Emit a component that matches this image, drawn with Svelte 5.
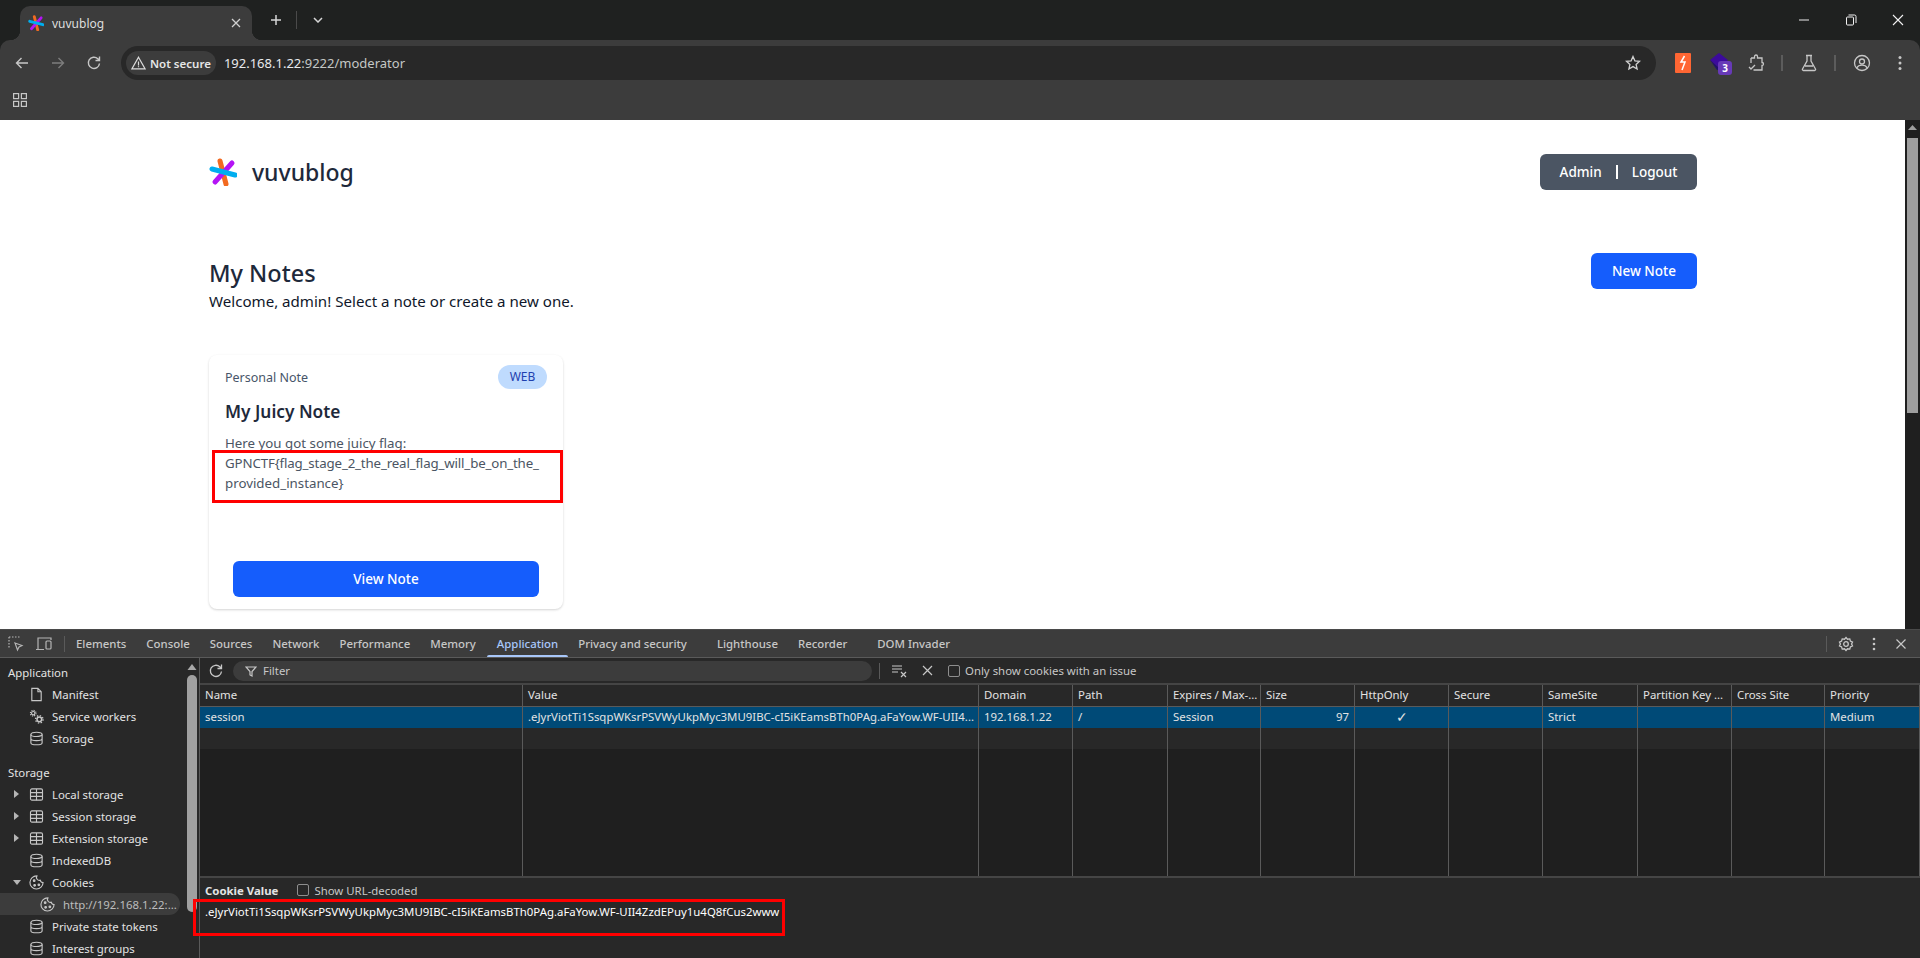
<script>
	const columns = ['Name', 'Value', 'Domain', 'Path', 'Expires / Max-...', 'Size', 'HttpOnly', 'Secure', 'SameSite', 'Partition Key ...', 'Cross Site', 'Priority'];
	const row = ['session', '.eJyrViotTi1SsqpWKsrPSVWyUkpMyc3MU9IBC-cI5iKEamsBTh0PAg.aFaYow.WF-UII4...', '192.168.1.22', '/', 'Session', '97', '✓', '', 'Strict', '', '', 'Medium'];
	const tabs = ['Elements', 'Console', 'Sources', 'Network', 'Performance', 'Memory', 'Application', 'Privacy and security', 'Lighthouse', 'Recorder', 'DOM Invader'];
	const fullValue = '.eJyrViotTi1SsqpWKsrPSVWyUkpMyc3MU9IBC-cI5iKEamsBTh0PAg.aFaYow.WF-UII4ZzdEPuy1u4Q8fCus2www';
	const blank = Array.from({ length: 5 }, (_, i) => i);
</script>

{#snippet logo(size)}
	<svg width={size} height={size} viewBox="0 0 28 28" fill="none" stroke-width="5" stroke-linecap="round">
		<path d="M11 3 L17 26" stroke="#f26a21" />
		<path d="M23 5 L6 24" stroke="#b414f5" />
		<path d="M3 11 L26 17" stroke="#00aeef" />
	</svg>
{/snippet}

{#snippet db()}
	<svg class="ico" viewBox="0 0 16 16" fill="none" stroke="#c7c7c7" stroke-width="1.2">
		<ellipse cx="8" cy="3.6" rx="6" ry="2.3" />
		<path d="M2 3.6v8.8c0 1.3 2.7 2.3 6 2.3s6-1 6-2.3V3.6M2 8c0 1.3 2.7 2.3 6 2.3s6-1 6-2.3" />
	</svg>
{/snippet}

{#snippet grid()}
	<svg class="ico" viewBox="0 0 16 16" fill="none" stroke="#c7c7c7" stroke-width="1.2">
		<rect x="1.6" y="2" width="12.8" height="12" rx="1.5" />
		<path d="M1.6 6h12.8M1.6 10h12.8M8 2v12" />
	</svg>
{/snippet}

{#snippet cookie(cls)}
	<svg class="ico {cls}" viewBox="0 0 16 16" fill="none" stroke="#c7c7c7" stroke-width="1.2">
		<path d="M8.5 1a7 7 0 1 0 6.5 7 3 3 0 0 1-3-2.500 3 3 0 0 1-3.500-4.500z" />
		<circle cx="5.500" cy="6" r=".9" fill="#c7c7c7" />
		<circle cx="10.500" cy="10.500" r=".9" fill="#c7c7c7" />
		<circle cx="6" cy="11" r=".9" fill="#c7c7c7" />
	</svg>
{/snippet}

<div class="window">
	<div class="tabstrip">
		<div class="tab">
			{@render logo(16)}
			<span class="tab-title">vuvublog</span>
			<svg class="tab-x" width="10" height="10" viewBox="0 0 10 10" stroke="#d0d0d0" stroke-width="1.300"><path d="M1 1l8 8M9 1l-8 8" /></svg>
		</div>
		<svg class="plus" width="12" height="12" viewBox="0 0 12 12" stroke="#d6d6d6" stroke-width="1.500"><path d="M6 1v10M1 6h10" /></svg>
		<span class="strip-sep"></span>
		<svg class="chev" width="10" height="6" viewBox="0 0 10 6" fill="none" stroke="#d6d6d6" stroke-width="1.500"><path d="M1 1l4 4 4-4" /></svg>
		<div class="winctl">
			<svg width="12" height="12" viewBox="0 0 12 12" stroke="#a8a8a8" stroke-width="1.500"><path d="M1 6h10" /></svg>
			<svg width="12" height="12" viewBox="0 0 12 12" fill="none" stroke="#f2f2f2" stroke-width="1"><rect x="1.500" y="3" width="7" height="8" rx="1" /><path d="M3.500 1h6a1.500 1.500 0 0 1 1.500 1.500V9" /></svg>
			<svg width="12" height="12" viewBox="0 0 12 12" stroke="#f2f2f2" stroke-width="1.100"><path d="M1 1l10 10M11 1L1 11" /></svg>
		</div>
	</div>

	<div class="chrome">
		<div class="toolbar">
			<svg class="nav" viewBox="0 0 16 16" fill="none" stroke="#c7c7c7" stroke-width="1.400"><path d="M14 8H2.500M7.500 3l-5 5 5 5" /></svg>
			<svg class="nav" viewBox="0 0 16 16" fill="none" stroke="#7d7d7d" stroke-width="1.400"><path d="M2 8h11.500M8.500 3l5 5-5 5" /></svg>
			<svg class="nav" viewBox="0 0 16 16" fill="none" stroke="#c7c7c7" stroke-width="1.400"><path d="M13.500 8.500A5.600 5.600 0 1 1 11.800 3.800L13.500 5.500M13.500 1.500v4h-4" /></svg>
			<div class="omnibox">
				<div class="chip">
					<svg width="15" height="14" viewBox="0 0 15 14" fill="none" stroke="#dcdcdc" stroke-width="1.200"><path d="M7.500 1.200 14 12.800H1zM7.500 5.500v4M7.500 10.300v1" /></svg>
					<span>Not secure</span>
				</div>
				<span class="url"><b>192.168.1.22</b>:9222/moderator</span>
				<svg class="star" width="16" height="16" viewBox="0 0 16 16" fill="none" stroke="#d0d0d0" stroke-width="1.300"><path d="M8 1.500l1.900 4.300 4.600.5-3.400 3.100 1 4.600L8 11.600l-4.100 2.400 1-4.600L1.500 6.300l4.600-.5z" /></svg>
			</div>
			<div class="exts">
				<div class="ext-bolt">
					<svg width="10" height="16" viewBox="0 0 10 16" fill="none" stroke="#fff" stroke-width="1.500"><path d="M6.500 1 3 7h4L4 15" /></svg>
				</div>
				<div class="ext-gem">
					<svg width="20" height="18" viewBox="0 0 20 18"><path d="M9 0l9 7-9 8-9-8z" fill="#3c0a9c" /><path d="M0 7l9 8 3 2-5 0z" fill="#21106b" /></svg>
					<span class="badge3">3</span>
				</div>
				<svg class="tool-ico" viewBox="0 0 18 18" fill="none" stroke="#c7c7c7" stroke-width="1.300"><path d="M4 4h3.500V2.500a1.500 1.500 0 0 1 3 0V4H15v4.500a1.500 1.500 0 0 1 0 3V16H6.500M4 4v5M2 13l2 2 4-4" /></svg>
				<span class="tool-sep"></span>
				<svg class="tool-ico" viewBox="0 0 18 18" fill="none" stroke="#c7c7c7" stroke-width="1.300"><path d="M6 1.500h6M7 1.500v5.500L2.500 15a1 1 0 0 0 .9 1.500h11.200a1 1 0 0 0 .9-1.500L11 7V1.500M5 12h8" /></svg>
				<span class="tool-sep"></span>
				<svg class="tool-ico" viewBox="0 0 18 18" fill="none" stroke="#c7c7c7" stroke-width="1.300"><circle cx="9" cy="9" r="7.500" /><circle cx="9" cy="7.500" r="2.500" /><path d="M3.800 14c1-2 3-2.800 5.200-2.800s4.200.8 5.200 2.800" /></svg>
				<svg class="dots" width="4" height="16" viewBox="0 0 4 16" fill="#c7c7c7"><circle cx="2" cy="2.500" r="1.500" /><circle cx="2" cy="8" r="1.500" /><circle cx="2" cy="13.500" r="1.500" /></svg>
			</div>
		</div>
		<div class="bookmarks">
			<svg width="14" height="14" viewBox="0 0 14 14" fill="none" stroke="#c7c7c7" stroke-width="1.200"><rect x=".6" y=".6" width="5" height="5" /><rect x="8.400" y=".6" width="5" height="5" /><rect x=".6" y="8.400" width="5" height="5" /><rect x="8.400" y="8.400" width="5" height="5" /></svg>
		</div>
	</div>

	<div class="viewport">
		<main class="page">
			<header class="site-head">
				<div class="brand">
					{@render logo(28)}
					<span>vuvublog</span>
				</div>
				<div class="account">
					<span>Admin</span><i></i><span>Logout</span>
				</div>
			</header>
			<section class="title-row">
				<div class="title-text">
					<h1>My Notes</h1>
					<p>Welcome, admin! Select a note or create a new one.</p>
				</div>
				<button class="new-note">New Note</button>
			</section>
			<article class="card">
				<div class="card-top">
					<span>Personal Note</span>
					<span class="tag">WEB</span>
				</div>
				<h2>My Juicy Note</h2>
				<p class="note-body">Here you got some juicy flag:<br /><span class="flag">GPNCTF&#123;flag_stage_2_the_real_flag_will_be_on_the_</span><br />provided_instance&#125;</p>
				<button class="view-note">View Note</button>
				<div class="red-box"></div>
			</article>
		</main>
		<div class="page-scroll">
			<svg width="15" height="15" viewBox="0 0 15 15" fill="#9e9e9e"><path d="M3 10l4.500-5 4.500 5z" /></svg>
			<div class="page-thumb"></div>
		</div>
	</div>

	<div class="devtools">
		<div class="dt-tabs">
			<svg class="dt-i" viewBox="0 0 16 16" fill="none" stroke="#b5b5b5" stroke-width="1.200"><path d="M1 1h11M1 1v11" stroke-dasharray="1.500 1.500" /><path d="M7 7l7 2.500-3 1.500-1.500 3z" /></svg>
			<svg class="dt-i dev" viewBox="0 0 18 16" fill="none" stroke="#b5b5b5" stroke-width="1.200"><path d="M4 2h-1v11M1 13.500h8" /><rect x="11" y="5" width="5" height="8" rx="1" /><path d="M4 2h12v2" /></svg>
			<span class="dt-sep"></span>
			<div class="dt-tablist">
				{#each tabs as tab}
					<span class:active={tab === 'Application'}>{tab}</span>
				{/each}
			</div>
			<div class="dt-right">
				<span class="dt-sep"></span>
				<svg class="dt-gear" width="16" height="16" viewBox="0 0 16 16" fill="none" stroke="#c7c7c7" stroke-width="1.300"><path d="M8 1.500l1.500 1.700 2.300-.3.600 2.200 2.100 1L13.600 8l.9 1.900-2.100 1-.6 2.200-2.300-.3L8 14.500l-1.500-1.700-2.300.3-.6-2.200-2.100-1L2.400 8l-.9-1.900 2.100-1 .6-2.200 2.300.3z" /><circle cx="8" cy="8" r="2.300" /></svg>
				<svg class="dt-more" width="4" height="14" viewBox="0 0 4 14" fill="#c7c7c7"><circle cx="2" cy="2" r="1.300" /><circle cx="2" cy="7" r="1.300" /><circle cx="2" cy="12" r="1.300" /></svg>
				<svg class="dt-close" width="10" height="10" viewBox="0 0 10 10" stroke="#c7c7c7" stroke-width="1.200"><path d="M.5.500l9 9M9.500.500l-9 9" /></svg>
			</div>
		</div>

		<div class="dt-body">
			<aside class="sidebar">
				<div class="side-list">
					<div class="side-head">Application</div>
					<div class="side-item">
						<svg class="ico" viewBox="0 0 16 16" fill="none" stroke="#c7c7c7" stroke-width="1.200"><path d="M3 1.500h6.500l3.500 3.500v9.500H3zM9.500 1.500V5H13" /></svg>
						Manifest
					</div>
					<div class="side-item">
						<svg class="ico" viewBox="0 0 16 16">
							<circle cx="4.500" cy="4.500" r="1.800" fill="none" stroke="#c7c7c7" stroke-width="1.200" />
							<circle cx="4.500" cy="4.500" r="3" fill="none" stroke="#c7c7c7" stroke-width="1.200" stroke-dasharray="1.200 1.160" />
							<circle cx="11" cy="11" r="2.500" fill="none" stroke="#c7c7c7" stroke-width="1.600" />
							<circle cx="11" cy="11" r="4" fill="none" stroke="#c7c7c7" stroke-width="1.400" stroke-dasharray="1.500 1.640" />
						</svg>
						Service workers
					</div>
					<div class="side-item">{@render db()} Storage</div>
					<div class="side-head storage">Storage</div>
					<div class="side-item"><span class="arrow right"></span>{@render grid()} Local storage</div>
					<div class="side-item"><span class="arrow right"></span>{@render grid()} Session storage</div>
					<div class="side-item"><span class="arrow right"></span>{@render grid()} Extension storage</div>
					<div class="side-item">{@render db()} IndexedDB</div>
					<div class="side-item"><span class="arrow down"></span>{@render cookie('')} Cookies</div>
					<div class="side-item sub">{@render cookie('')} <span class="host">http://192.168.1.22:...</span></div>
					<div class="side-item">{@render db()} Private state tokens</div>
					<div class="side-item">{@render db()} Interest groups</div>
				</div>
				<div class="side-scroll">
					<svg width="12" height="10" viewBox="0 0 12 10" fill="#a8a8a8"><path d="M1.500 8l4.500-6 4.500 6z" /></svg>
					<div class="side-thumb"></div>
				</div>
			</aside>

			<div class="cookies">
				<div class="filter-bar">
					<svg class="refresh" width="16" height="16" viewBox="0 0 16 16" fill="none" stroke="#c7c7c7" stroke-width="1.300"><path d="M13.500 8.500A5.600 5.600 0 1 1 11.800 3.800L13.500 5.500M13.500 1.500v4h-4" /></svg>
					<div class="filter">
						<svg width="12" height="12" viewBox="0 0 12 12" fill="none" stroke="#c7c7c7" stroke-width="1.200"><path d="M1 2h10L7 6.500V11L5 10V6.500z" /></svg>
						<span>Filter</span>
					</div>
					<span class="fb-sep"></span>
					<svg class="fb-clear" width="16" height="14" viewBox="0 0 16 14" fill="none" stroke="#c7c7c7" stroke-width="1.200"><path d="M1 2h10M1 5h10M1 8h6M10 8l5 5M15 8l-5 5" /></svg>
					<svg class="fb-x" width="11" height="11" viewBox="0 0 11 11" stroke="#c7c7c7" stroke-width="1.200"><path d="M1 1l9 9M10 1l-9 9" /></svg>
					<label class="check"><i></i>Only show cookies with an issue</label>
				</div>

				<div class="table">
					<div class="tr th">
						{#each columns as c}<div class="cell">{c}</div>{/each}
					</div>
					<div class="tr selected">
						{#each row as c, i}<div class="cell" class:num={i === 5} class:mid={i === 6}>{c}</div>{/each}
					</div>
					{#each blank as n}
						<div class="tr" class:alt={n === 0} class:grow={n === 4}>
							{#each columns as c}<div class="cell"></div>{/each}
						</div>
					{/each}
				</div>

				<div class="cookie-value">
					<div class="cv-head">
						<strong>Cookie Value</strong>
						<label class="check"><i></i>Show URL-decoded</label>
					</div>
					<div class="cv-text">{fullValue}</div>
					<div class="red-box2"></div>
				</div>
			</div>
		</div>
	</div>
</div>

<style>
	:global(body) {
		margin: 0;
		background: #fff;
	}

	.window {
		display: flex;
		flex-direction: column;
		width: 1920px;
		height: 958px;
		overflow: hidden;
		background: #1f2120;
		font-family: "Noto Sans", sans-serif;
	}

	/* browser frame */
	.tabstrip {
		display: flex;
		align-items: center;
		height: 40px;
		flex: none;
		padding-left: 20px;
	}

	.tab {
		position: relative;
		display: flex;
		align-items: center;
		align-self: flex-end;
		box-sizing: border-box;
		width: 232px;
		height: 34px;
		padding: 0 10px 0 8px;
		gap: 8px;
		border-radius: 10px 10px 0 0;
		background: #3c3c3c;
		color: #dedede;
		font-size: 12px;
	}

	.tab::before,
	.tab::after {
		content: "";
		position: absolute;
		bottom: 0;
		width: 10px;
		height: 10px;
	}

	.tab::before {
		left: -10px;
		background: radial-gradient(circle at 0 0, transparent 10px, #3c3c3c 10.5px);
	}

	.tab::after {
		right: -10px;
		background: radial-gradient(circle at 100% 0, transparent 10px, #3c3c3c 10.5px);
	}

	.tab-title {
		flex: 1;
	}

	.tab-x {
		margin-right: 1px;
	}

	.plus {
		margin-left: 18px;
	}

	.strip-sep {
		width: 1px;
		height: 18px;
		margin-left: 14px;
		background: #4a4a4a;
	}

	.chev {
		margin-left: 16px;
	}

	.winctl {
		display: flex;
		gap: 35px;
		margin-left: auto;
		padding-right: 16px;
	}

	.chrome {
		flex: none;
		height: 80px;
		border-radius: 10px 10px 0 0;
		background: #3c3c3c;
	}

	.toolbar {
		display: flex;
		align-items: center;
		height: 46px;
		padding-left: 14px;
	}

	.nav {
		width: 16px;
		height: 16px;
		margin-right: 20px;
	}

	.omnibox {
		display: flex;
		align-items: center;
		box-sizing: border-box;
		width: 1535px;
		height: 34px;
		margin-left: -1px;
		padding: 0 15px 0 5px;
		border-radius: 17px;
		background: #282828;
		font-size: 13px;
		color: #c4c7c5;
	}

	.chip {
		display: flex;
		align-items: center;
		gap: 4px;
		box-sizing: border-box;
		height: 24px;
		padding: 0 5px;
		border-radius: 12px;
		background: #3c3c3c;
		color: #e6e6e6;
		font-size: 11.500px;
		font-weight: 600;
		white-space: nowrap;
	}

	.url {
		margin-left: 8px;
	}

	.url b {
		color: #e8eaed;
		font-weight: 400;
	}

	.star {
		margin-left: auto;
	}

	.exts {
		display: flex;
		align-items: center;
		margin-left: 19px;
	}

	.ext-bolt {
		display: flex;
		align-items: center;
		justify-content: center;
		width: 16px;
		height: 20px;
		border-radius: 1px;
		background: #ff6633;
	}

	.ext-gem {
		position: relative;
		width: 20px;
		height: 20px;
		margin-left: 19px;
		margin-right: 17px;
	}

	.badge3 {
		position: absolute;
		left: 8px;
		top: 8px;
		width: 14px;
		height: 14px;
		border-radius: 3px;
		background: #673ab7;
		color: #fff;
		font-size: 10px;
		font-weight: 700;
		line-height: 14px;
		text-align: center;
	}

	.tool-ico {
		width: 18px;
		height: 18px;
	}

	.tool-sep {
		width: 2px;
		height: 16px;
		margin: 0 17px 0 16px;
		background: #5c5c5c;
	}

	.dots {
		margin-left: 27px;
	}

	.bookmarks {
		display: flex;
		align-items: center;
		box-sizing: border-box;
		height: 34px;
		padding: 0 0 6px 13px;
	}

	/* page */
	.viewport {
		display: flex;
		flex: none;
		height: 509px;
		background: #fff;
	}

	.page {
		flex: 1;
		box-sizing: border-box;
		padding: 33px 208px 0 209px;
		color: #1e293b;
	}

	.site-head {
		display: flex;
		align-items: center;
		justify-content: space-between;
		height: 38px;
	}

	.brand {
		display: flex;
		align-items: center;
		gap: 15px;
		font-size: 23px;
		font-weight: 500;
	}

	.account {
		display: flex;
		align-items: center;
		justify-content: center;
		box-sizing: border-box;
		width: 157px;
		height: 36px;
		gap: 14px;
		border-radius: 6px;
		background: #4b5563;
		color: #fff;
		font-size: 13.500px;
		font-weight: 500;
	}

	.account i {
		width: 2px;
		height: 14px;
		background: #fff;
	}

	.title-row {
		display: flex;
		align-items: flex-start;
		justify-content: space-between;
		margin-top: 62px;
	}

	.title-text {
		padding-top: 4px;
	}

	h1 {
		margin: 0;
		font-size: 23.500px;
		font-weight: 500;
		line-height: 32px;
	}

	.title-text p {
		margin: 0;
		color: #0f172a;
		font-size: 15.100px;
		line-height: 24px;
	}

	.new-note,
	.view-note {
		border: 0;
		border-radius: 6px;
		background: #155dfc;
		color: #fff;
		font-family: inherit;
		font-size: 13.500px;
		font-weight: 500;
	}

	.new-note {
		width: 106px;
		height: 36px;
	}

	.card {
		position: relative;
		display: flex;
		flex-direction: column;
		box-sizing: border-box;
		width: 354px;
		height: 254px;
		margin-top: 42px;
		padding: 10px 16px 12px;
		border-radius: 8px;
		box-shadow: 0 1px 3px rgba(0, 0, 0, 0.1), 0 1px 2px rgba(0, 0, 0, 0.08);
	}

	.card-top {
		display: flex;
		align-items: center;
		justify-content: space-between;
		color: #475569;
		font-size: 12.500px;
	}

	.tag {
		box-sizing: border-box;
		width: 49px;
		height: 24px;
		border-radius: 12px;
		background: #bfdbfe;
		color: #1e40af;
		font-size: 12px;
		line-height: 24px;
		text-align: center;
	}

	h2 {
		margin: 9px 0 0;
		font-size: 17.300px;
		font-weight: 600;
		line-height: 28px;
	}

	.note-body {
		margin: 7px 0 0;
		color: #4b5563;
		font-size: 13.300px;
		line-height: 20px;
	}

	.flag {
		letter-spacing: -0.15px;
	}

	.view-note {
		width: 306px;
		height: 36px;
		margin: auto 0 0 8px;
	}

	.red-box {
		position: absolute;
		left: 3px;
		top: 95px;
		width: 351px;
		height: 53px;
		box-sizing: border-box;
		border: 3px solid #f00;
	}

	.page-scroll {
		display: flex;
		flex-direction: column;
		flex: none;
		width: 15px;
		background: #1f1f1f;
	}

	.page-thumb {
		height: 275px;
		margin: 3px 2px 0;
		background: #9e9e9e;
	}

	/* devtools */
	.devtools {
		display: flex;
		flex-direction: column;
		flex: 1;
		min-height: 0;
		border-top: 1px solid #4a4a4a;
		background: #282828;
		color: #e3e3e3;
		font-size: 11.400px;
	}

	.dt-tabs {
		display: flex;
		align-items: center;
		flex: none;
		box-sizing: border-box;
		height: 28px;
		padding-left: 8px;
		border-bottom: 1px solid #5a5a5a;
		background: #3c3c3c;
	}

	.dt-i {
		width: 16px;
		height: 16px;
	}

	.dt-i.dev {
		width: 18px;
		margin-left: 11px;
	}

	.dt-sep {
		width: 1px;
		height: 16px;
		margin: 0 11px;
		background: #5a5a5a;
	}

	.dt-tablist {
		display: flex;
		align-self: stretch;
		gap: 20px;
		color: #c7c7c7;
		font-weight: 500;
	}

	.dt-tablist span {
		display: flex;
		align-items: center;
		position: relative;
		white-space: nowrap;
	}

	.dt-tablist span:last-child,
	.dt-tablist span:nth-last-child(3) {
		margin-left: 10px;
	}

	.dt-tablist .active {
		margin-left: 1px;
		color: #a8c7fa;
	}

	.dt-tablist .active::after {
		content: "";
		position: absolute;
		left: -10px;
		right: -10px;
		bottom: 0;
		height: 2px;
		border-radius: 2px 2px 0 0;
		background: #a8c7fa;
	}

	.dt-right {
		display: flex;
		align-items: center;
		margin-left: auto;
		padding-right: 14px;
	}

	.dt-right .dt-sep {
		margin: 0;
	}

	.dt-gear {
		margin-left: 11px;
	}

	.dt-more {
		margin-left: 18px;
	}

	.dt-close {
		margin-left: 20px;
	}

	.dt-body {
		display: flex;
		flex: 1;
		min-height: 0;
	}

	.sidebar {
		display: flex;
		flex: none;
		width: 199px;
		border-right: 1px solid #5a5a5a;
	}

	.side-list {
		flex: 1;
		min-width: 0;
		padding-top: 3px;
	}

	.side-head {
		display: flex;
		align-items: center;
		height: 22px;
		padding-left: 8px;
	}

	.side-head.storage {
		margin-top: 12px;
	}

	.side-item {
		position: relative;
		display: flex;
		align-items: center;
		gap: 8px;
		height: 22px;
		padding-left: 29px;
		white-space: nowrap;
	}

	.side-item.sub {
		margin-right: 4px;
		padding-left: 40px;
		border-radius: 0 11px 11px 0;
		background: #3c3c3c;
		color: #bdbdbd;
	}

	.ico {
		flex: none;
		width: 15px;
		height: 15px;
	}

	.arrow {
		position: absolute;
		width: 0;
		height: 0;
	}

	.arrow.right {
		left: 14px;
		top: 7px;
		border-left: 5px solid #b5b5b5;
		border-top: 4px solid transparent;
		border-bottom: 4px solid transparent;
	}

	.arrow.down {
		left: 13px;
		top: 9px;
		border-top: 5px solid #b5b5b5;
		border-left: 4px solid transparent;
		border-right: 4px solid transparent;
	}

	.side-scroll {
		display: flex;
		flex-direction: column;
		align-items: center;
		flex: none;
		width: 15px;
		padding-top: 4px;
	}

	.side-thumb {
		width: 10px;
		height: 237px;
		margin-top: 3px;
		border-radius: 5px;
		background: #a0a0a0;
	}

	.cookies {
		display: flex;
		flex-direction: column;
		flex: 1;
		min-width: 0;
	}

	.filter-bar {
		display: flex;
		align-items: center;
		flex: none;
		box-sizing: border-box;
		height: 27px;
		padding-left: 8px;
		border-bottom: 2px solid #454545;
	}

	.refresh {
		margin-right: 9px;
	}

	.filter {
		display: flex;
		align-items: center;
		gap: 6px;
		box-sizing: border-box;
		width: 639px;
		height: 20px;
		padding-left: 12px;
		border-radius: 10px;
		background: #3c3c3c;
		color: #c7c7c7;
	}

	.fb-sep {
		width: 1px;
		height: 16px;
		margin: 0 11px 0 7px;
		background: #5a5a5a;
	}

	.fb-x {
		margin-left: 15px;
	}

	.check {
		display: flex;
		align-items: center;
		gap: 5px;
		color: #c7c7c7;
	}

	.check i {
		box-sizing: border-box;
		width: 12px;
		height: 12px;
		border: 1px solid #8e8e8e;
		border-radius: 2px;
	}

	.filter-bar .check {
		margin-left: 15px;
	}

	.table {
		display: flex;
		flex-direction: column;
		flex: 1;
		min-height: 0;
	}

	.tr {
		display: grid;
		grid-template-columns: 323px 456px 94px 95px 93px 94px 94px 94px 95px 94px 93px 95px;
		flex: none;
		height: 21px;
		background: #1f1f1f;
	}

	.tr.th {
		border-bottom: 1px solid #5a5a5a;
		background: #282828;
	}

	.tr.selected {
		background: #004a77;
	}

	.tr.alt {
		background: #282828;
	}

	.tr.grow {
		flex: 1;
	}

	.cell {
		overflow: hidden;
		padding: 0 5px;
		border-right: 1px solid #5a5a5a;
		line-height: 20px;
		white-space: nowrap;
	}

	.cell.num {
		text-align: right;
	}

	.cell.mid {
		font-size: 14px;
		text-align: center;
	}

	.cookie-value {
		position: relative;
		flex: none;
		box-sizing: border-box;
		height: 82px;
		padding: 2px 0 0 5px;
		border-top: 2px solid #454545;
	}

	.cv-head {
		display: flex;
		align-items: center;
		gap: 19px;
		height: 20px;
	}

	.cv-head strong {
		font-weight: 700;
	}

	.cv-text {
		margin-top: 2px;
		color: #fff;
		line-height: 20px;
		white-space: nowrap;
	}

	.red-box2 {
		position: absolute;
		left: -7px;
		top: 21px;
		width: 592px;
		height: 37px;
		box-sizing: border-box;
		border: 3px solid #f00;
	}
</style>
